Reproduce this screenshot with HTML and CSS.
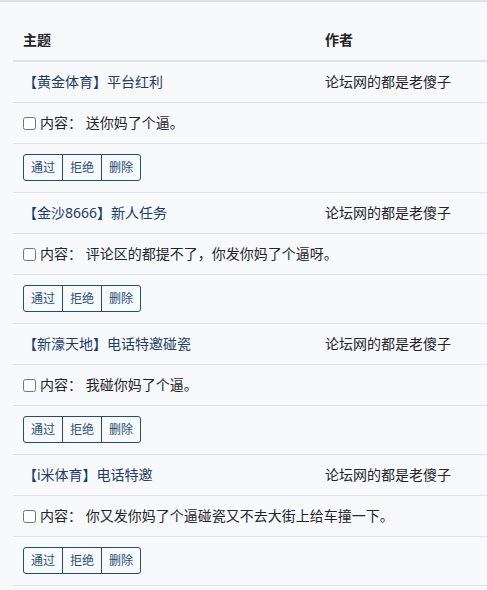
FILE: index.html
```html
<!DOCTYPE html>
<html lang="zh-CN">
<head>
	<meta charset="utf-8">
	<meta name="viewport" content="width=device-width, initial-scale=1">
	<title>审核</title>
	<link rel="stylesheet" href="styles.css">
</head>
<body>
   <div class="panel" role="main">
       <table class="review">
           <thead>
               <tr>
                   <th class="col-title">主题</th>
                   <th>作者</th>
               </tr>
           </thead>
           <tbody>
               <tr>
                   <td><a href="#">【黄金体育】平台红利</a></td>
                   <td>论坛网的都是老傻子</td>
               </tr>
               <tr>
                   <td colspan="2"><label><input type="checkbox"> 内容： 送你妈了个逼。</label></td>
               </tr>
               <tr>
                   <td colspan="2" class="actions">
                       <div class="btn-group">
                           <button>通过</button><button>拒绝</button><button>删除</button>
                       </div>
                   </td>
               </tr>

               <tr>
                   <td><a href="#">【金沙8666】新人任务</a></td>
                   <td>论坛网的都是老傻子</td>
               </tr>
               <tr>
                   <td colspan="2"><label><input type="checkbox"> 内容： 评论区的都提不了，你发你妈了个逼呀。</label></td>
               </tr>
               <tr>
                   <td colspan="2" class="actions">
                       <div class="btn-group">
                           <button>通过</button><button>拒绝</button><button>删除</button>
                       </div>
                   </td>
               </tr>

               <tr>
                   <td><a href="#">【新濠天地】电话特邀碰瓷</a></td>
                   <td>论坛网的都是老傻子</td>
               </tr>
               <tr>
                   <td colspan="2"><label><input type="checkbox"> 内容： 我碰你妈了个逼。</label></td>
               </tr>
               <tr>
                   <td colspan="2" class="actions">
                       <div class="btn-group">
                           <button>通过</button><button>拒绝</button><button>删除</button>
                       </div>
                   </td>
               </tr>

               <tr>
                   <td><a href="#">【i米体育】电话特邀</a></td>
                   <td>论坛网的都是老傻子</td>
               </tr>
               <tr>
                   <td colspan="2"><label><input type="checkbox"> 内容： 你又发你妈了个逼碰瓷又不去大街上给车撞一下。</label></td>
               </tr>
               <tr>
                   <td colspan="2" class="actions">
                       <div class="btn-group">
                           <button>通过</button><button>拒绝</button><button>删除</button>
                       </div>
                   </td>
               </tr>
           </tbody>
       </table>
   </div>
</body>
</html>
```

FILE: styles.css
```css
body {
	font-family: 'Noto Sans', 'Noto Sans CJK SC', sans-serif;
	font-size: 14px;
	color: #212529;
	background-color: #f8f9fa;
	margin: 0;
	padding: 0;
}

.panel {
	border-top: 2px solid #dee2e6;
	padding: 18px 0 0 13px;
}

.review {
	width: 100%;
	border-collapse: collapse;
}

.review th,
.review td {
	text-align: left;
	padding: 10px;
	height: 20px;
	line-height: 20px;
	border-bottom: 1px solid #dee2e6;
	white-space: nowrap;
}

.review th {
	font-weight: bold;
	border-bottom-width: 2px;
}

.col-title {
	width: 282px;
}

.review a {
	color: #1d3c68;
	text-decoration: none;
}

.review label {
	display: flex;
	align-items: center;
	height: 20px;
}

.review input[type="checkbox"] {
	width: 13px;
	height: 13px;
	margin: 0 4px 0 0;
}

.review td.actions {
	height: 27px;
	padding: 10px 10px 11px;
}

.btn-group {
	display: flex;
}

.btn-group button {
	font-family: inherit;
	font-size: 12px;
	line-height: 17px;
	height: 27px;
	padding: 4px 7px;
	color: #1f4e79;
	background: transparent;
	border: 1px solid #1f4e79;
	border-radius: 0;
	margin-left: -1px;
}

.btn-group button:first-child {
	margin-left: 0;
	border-radius: 3px 0 0 3px;
}

.btn-group button:last-child {
	border-radius: 0 3px 3px 0;
}
```
